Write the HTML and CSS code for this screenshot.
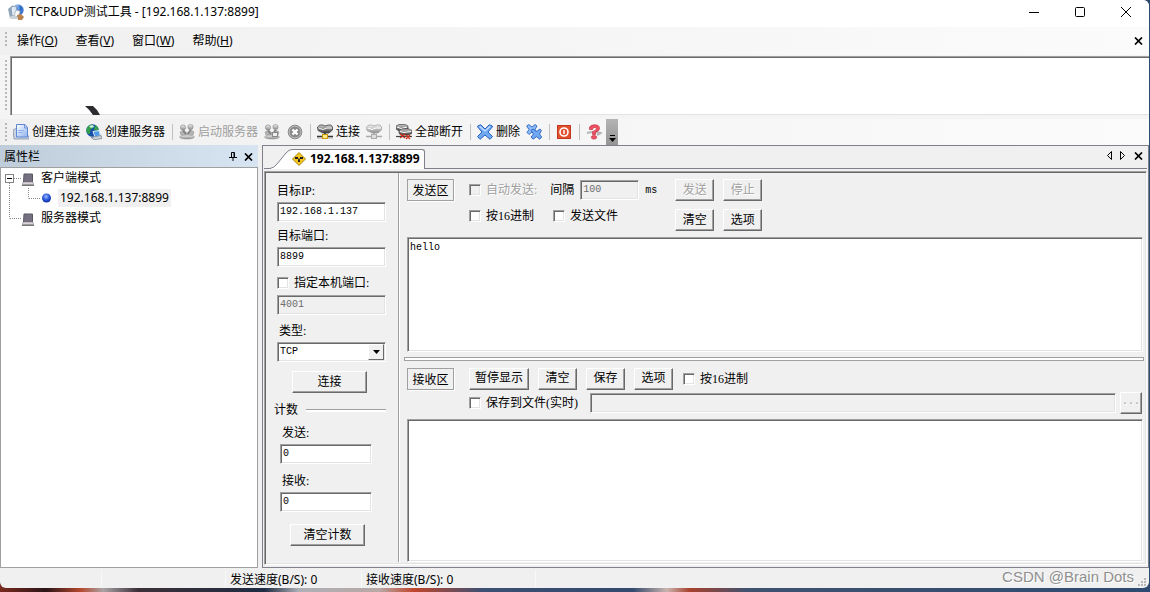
FILE: index.html
```html
<!DOCTYPE html>
<html lang="zh-CN">
<head>
<meta charset="utf-8">
<title>TCP&amp;UDP测试工具</title>
<link rel="stylesheet" href="styles.css">
</head>
<body>
<svg class="defs" width="0" height="0" aria-hidden="true">
  <defs>
    <linearGradient id="gBlue" x1="0" y1="0" x2="1" y2="1"><stop offset="0" stop-color="#a9cdf8"/><stop offset="1" stop-color="#1d58c0"/></linearGradient>
    <linearGradient id="gDoc" x1="0" y1="0" x2="1" y2="1"><stop offset="0" stop-color="#ffffff"/><stop offset="1" stop-color="#8fb2ee"/></linearGradient>
    <linearGradient id="gGray" x1="0" y1="0" x2="0" y2="1"><stop offset="0" stop-color="#f2f2f2"/><stop offset="1" stop-color="#8c8c8c"/></linearGradient>
    <linearGradient id="gDark" x1="0" y1="0" x2="0" y2="1"><stop offset="0" stop-color="#d0d0d0"/><stop offset="1" stop-color="#3a3a3a"/></linearGradient>
    <radialGradient id="gBall" cx=".45" cy=".35" r=".7"><stop offset="0" stop-color="#9fc0ff"/><stop offset=".5" stop-color="#2c58dc"/><stop offset="1" stop-color="#0a2a96"/></radialGradient>
    <symbol id="net" viewBox="0 0 16 16">
      <path d="M.5 3L3 1h3l2 1 3-1h3l1.500 2v3L12 9H6L1 6.500z" fill="url(#gDark)" stroke="#444" stroke-width=".8"/>
      <path d="M1.500 4l4.500 1.500L10 4l5 0" fill="none" stroke="#f4f4f4" stroke-width="1"/>
      <path d="M8 9v3" stroke="#444" stroke-width="2"/><path d="M0 12.500h16" stroke="#333" stroke-width="1.500"/><path d="M0 14h16" stroke="#aaa"/>
    </symbol>
    <symbol id="netoff" viewBox="0 0 16 16">
      <path d="M.5 3L3 1h3l2 1 3-1h3l1.500 2v3L12 9H6L1 6.500z" fill="url(#gGray)" stroke="#a4a4a4" stroke-width=".8"/>
      <path d="M1.500 4l4.500 1.500L10 4l5 0" fill="none" stroke="#fff" stroke-width="1"/>
      <path d="M8 9v3" stroke="#aaa" stroke-width="2"/><path d="M0 12.500h16" stroke="#aaa" stroke-width="1.500"/>
      <rect x="5.500" y="10.500" width="5" height="4" fill="#ddd" stroke="#aaa"/>
    </symbol>
    <symbol id="people" viewBox="0 0 16 16">
      <path d="M1 8l4-2 3 3 4-3 3 2-1 3-5 1-7-1z" fill="#b4b4b4" stroke="#969696" stroke-width=".6"/>
      <circle cx="4" cy="3.500" r="2.600" fill="url(#gGray)" stroke="#8f8f8f" stroke-width=".7"/>
      <circle cx="11.500" cy="3" r="2.600" fill="url(#gGray)" stroke="#8f8f8f" stroke-width=".7"/>
      <path d="M4 6.500l3 4M11.500 6L9 10" stroke="#808080" stroke-width="1.500"/>
      <ellipse cx="8" cy="13" rx="7.500" ry="2" fill="url(#gGray)" stroke="#999" stroke-width=".6"/>
    </symbol>
    <symbol id="host" viewBox="0 0 12 13">
      <path d="M2 1h8.500v8h-9z" fill="#757080" stroke="#5a5664"/>
      <path d="M1.300 9h9.500l1 2.500H.3z" fill="#ded6de" stroke="#8a858f" stroke-width=".6"/>
      <path d="M0 12.300h12" stroke="#555"/>
    </symbol>
    <symbol id="cross" viewBox="0 0 9 8"><path d="M1 .5l7 7M8 .5l-7 7" stroke="#000" stroke-width="1.700"/></symbol>
  </defs>
</svg>
<div class="window">
  <header class="titlebar">
    <svg class="app-icon" width="16" height="16" viewBox="0 0 16 16">
      <path d="M0 5l5-4 2 11-5 2z" fill="#8fa6ba"/><circle cx="10" cy="6" r="5.700" fill="url(#gBlue)"/>
      <path d="M11 1l3 2 1 3-3 1z" fill="#2f6fc4"/><path d="M3 3l5-1 1 9-5 1z" fill="#dfe9f3" stroke="#7e94a8" stroke-width=".7"/>
      <path d="M8 6l4 1-1 6-5-1z" fill="#f8f8f8" stroke="#8f98a2" stroke-width=".6"/><path d="M9 11l4-1 3 3-2 3h-4z" fill="#b98350"/><path d="M1 13l6-2 3 4H3z" fill="#c9d3dc"/>
    </svg>
    <h1 class="title">TCP&amp;UDP测试工具 - [192.168.1.137:8899]</h1>
    <div class="caption">
      <button class="bare" aria-label="最小化"><svg width="12" height="12" viewBox="0 0 12 12"><path d="M1 6.500h10" stroke="#000"/></svg></button>
      <button class="bare" aria-label="最大化"><svg width="12" height="12" viewBox="0 0 12 12"><rect x="1.500" y="1.500" width="9" height="9" rx="1" fill="none" stroke="#000"/></svg></button>
      <button class="bare" aria-label="关闭"><svg width="12" height="12" viewBox="0 0 12 12"><path d="M1 1l10 10M11 1L1 11" stroke="#000"/></svg></button>
    </div>
  </header>
  <nav class="menubar">
    <span class="grip"></span>
    <button class="bare">操作(<u>O</u>)</button>
    <button class="bare">查看(<u>V</u>)</button>
    <button class="bare">窗口(<u>W</u>)</button>
    <button class="bare">帮助(<u>H</u>)</button>
    <button class="bare doc-close" aria-label="关闭文档"><svg width="9" height="8"><use href="#cross"/></svg></button>
  </nav>
  <div class="banner">
    <span class="grip"></span>
    <div class="banner-view"><svg width="15" height="9" viewBox="0 0 15 9"><path d="M0 0h8q4 3 7 9H8Q5 4 0 0z" fill="#2b2b30"/></svg></div>
  </div>
  <div class="toolbar">
    <span class="grip"></span>
    <button class="tool"><svg width="16" height="16" viewBox="0 0 16 16"><path d="M0 6l4-2v8h12v3H1z" fill="#c9d2e0" stroke="#7887a2" stroke-width=".7"/><path d="M3.500 .5H12l2.500 3v9.500h-11z" fill="url(#gDoc)" stroke="#5e86d4"/><path d="M11.500 1v3h3" fill="none" stroke="#5e86d4" stroke-width=".8"/><path d="M5 6.500h6M5 8.500h5" stroke="#8fb2ee"/></svg>创建连接</button>
    <button class="tool"><svg width="16" height="16" viewBox="0 0 16 16"><circle cx="6.500" cy="6.500" r="6.300" fill="#164fa8"/><path d="M.5 5q2-5 6-4.500l1 3-3 2-1 5Q0 9 .5 5zM9 1q4 2 3.500 6L8 6z" fill="#35a04a"/><path d="M3 2l4-1 1 2-3 1z" fill="#c8f0e0"/><path d="M7 7.500l6-1 1.500 5L9 13z" fill="#4d9be8" stroke="#dfe9f2"/><path d="M5 13.500l10-2 1 3-8 1.200z" fill="#d0d6dd" stroke="#596370" stroke-width=".6"/></svg>创建服务器</button>
    <span class="sep"></span>
    <button class="tool" disabled><svg width="16" height="16"><use href="#people"/></svg>启动服务器</button>
    <button class="tool" aria-label="停止服务器" disabled><svg width="16" height="16" viewBox="0 0 16 16"><use href="#people"/><rect x="8.500" y="8.500" width="5" height="4" fill="#eee" stroke="#888"/></svg></button>
    <button class="tool wide-icon" aria-label="取消" disabled><svg width="16" height="16" viewBox="0 0 16 16"><circle cx="8" cy="8" r="6.800" fill="#8b8b8b" stroke="#7a7a7a"/><circle cx="8" cy="8" r="6" fill="none" stroke="#c4c4c4"/><path d="M5.500 5.500l5 5M10.500 5.500l-5 5" stroke="#fff" stroke-width="2.400"/></svg></button>
    <span class="sep"></span>
    <button class="tool"><svg width="16" height="16" viewBox="0 0 16 16"><use href="#net"/><rect x="5.500" y="10.500" width="5" height="4" fill="#ffe98a" stroke="#c79a00"/></svg>连接</button>
    <button class="tool" aria-label="断开" disabled><svg width="16" height="16"><use href="#netoff"/></svg></button>
    <span class="sep"></span>
    <button class="tool"><svg width="16" height="16" viewBox="0 0 16 16"><path d="M0 2l3-1.500h6L12 2v3L8 7H3L0 5z" fill="url(#gDark)" stroke="#444" stroke-width=".7"/><path d="M1 3l4 1.500L11 3" fill="none" stroke="#fff"/><path d="M3 6.500L6 5h7l3 1.500v3L12 11H7L3 9.500z" fill="url(#gDark)" stroke="#444" stroke-width=".7"/><path d="M4 7.500l4 1 7-1" fill="none" stroke="#fff"/><path d="M0 12.500h16" stroke="#444" stroke-width="1.200"/><path d="M4 10l5 4M9 10l-5 4M10 11l4 4M14 11l-4 4" stroke="#d42b14" stroke-width="1.400"/></svg>全部断开</button>
    <span class="sep"></span>
    <button class="tool"><svg width="16" height="16" viewBox="0 0 16 16"><path d="M.7 2l3-1.300L8 5l4.300-4.300 3 1.300v1L11 8l4.500 4.500-2.500 2.800L8 11l-5 4.300L.5 12.500 5 8 .7 3z" fill="#6fa9f2" stroke="#2a62c0"/><path d="M2.500 2.500L8 7l5-4.500" fill="none" stroke="#c9e0ff" stroke-width="1.200"/></svg>删除</button>
    <button class="tool" aria-label="全部删除"><svg width="16" height="16" viewBox="0 0 16 16"><path d="M.7 2l2-1.500L6 3l3-2.500 2 1.500-2 3.500 2.500 3-2 2L6 8l-3 2.500-2-2L3 5.500z" fill="#8ebcf6" stroke="#2a62c0" stroke-width=".9"/><path d="M5 6.500l2-1.500 3.500 2.500L14 5l1.500 1.500-2 3.500 2.200 3-2 2.200-3.200-2.500L7 15.200 5 13l2.500-3z" fill="#6fa9f2" stroke="#2a62c0" stroke-width=".9"/></svg></button>
    <span class="sep"></span>
    <button class="tool" aria-label="退出"><svg width="16" height="16" viewBox="0 0 16 16"><rect x="1.500" y="1.500" width="13" height="13" fill="#e2502f" stroke="#c43a1c"/><circle cx="8" cy="8" r="4" fill="none" stroke="#fff" stroke-width="1.600"/><path d="M8 6v4" stroke="#fff" stroke-width="1.500"/></svg></button>
    <span class="sep"></span>
    <button class="tool" aria-label="帮助"><svg width="16" height="16" viewBox="0 0 16 16"><path d="M1 9l5-1M10 8l5 1-4 2" fill="none" stroke="#b5b5b5" stroke-width="2"/><path d="M3.500 5.500V3Q5 .8 8.500 .8q5 0 5 3.700 0 2.500-4 3.700v2.300h-3V7.500q4-1 4-2.700 0-1.300-2-1.300-1.800 0-2 2z" fill="#ee5163" stroke="#c9303f" stroke-width=".7"/><ellipse cx="8" cy="13.300" rx="2.700" ry="1.800" fill="#ee5163" stroke="#c9303f" stroke-width=".7"/></svg></button>
    <button class="overflow" aria-label="更多"><svg width="7" height="7" viewBox="0 0 7 7"><path d="M1 .5h5" stroke="#000"/><path d="M0 3h7L3.500 7z" fill="#000"/></svg></button>
  </div>
  <main class="workspace">
    <aside class="side">
      <div class="side-head">
        <h2 class="side-title">属性栏</h2>
        <button class="bare" aria-label="固定"><svg width="8" height="9" viewBox="0 0 8 9"><path d="M2.500 5V.5h3V5M5 1v4M0 5.500h8M4 6v3" fill="none" stroke="#000"/></svg></button>
        <button class="bare" aria-label="关闭"><svg width="9" height="8"><use href="#cross"/></svg></button>
      </div>
      <ul class="tree">
        <li class="node"><svg width="35" height="20" viewBox="1 0 35 20"><path d="M14 10.500h8M9.500 15v5" stroke="#888" stroke-dasharray="1 1"/><rect x="5.500" y="6.500" width="8" height="8" fill="#fff" stroke="#848484"/><path d="M7 10.500h5" stroke="#000"/><use href="#host" x="22" y="5" width="12" height="13"/></svg><span class="node-text">客户端模式</span></li>
        <li class="node"><svg width="53" height="20" viewBox="1 0 53 20"><path d="M9.500 0v20M28.500 0v10.500M29 10.500h11" fill="none" stroke="#888" stroke-dasharray="1 1"/><circle cx="46.500" cy="10" r="4.500" fill="url(#gBall)"/></svg><span class="node-text selected">192.168.1.137:8899</span></li>
        <li class="node"><svg width="35" height="20" viewBox="1 0 35 20"><path d="M9.500 0v10.500M10 10.500h11" fill="none" stroke="#888" stroke-dasharray="1 1"/><use href="#host" x="22" y="5" width="12" height="13"/></svg><span class="node-text">服务器模式</span></li>
      </ul>
    </aside>
    <section class="docs">
      <div class="tabs">
        <span class="tab-lead"></span>
        <svg class="slope" width="22" height="20" viewBox="0 0 22 20"><path d="M0 20Q4 19 7 15L16 4Q19 .5 22 .5V20z" fill="#fff"/><path d="M0 19.500Q4 19 7 15L16 4Q19 .5 22 .5" fill="none" stroke="#80808a"/></svg>
        <button class="tab"><svg width="14" height="14" viewBox="0 0 14 14"><path d="M7 .5L13.500 7 7 13.500.5 7z" fill="#f6c61c" stroke="#a88718"/><path d="M5 6l2 1.500L9 6M7 7v3" stroke="#222" fill="none"/><path d="M3 5h3v2H3zM8 5h3v2H8zM6 8h2v2H6z" fill="#222"/></svg>192.168.1.137:8899</button>
        <div class="tab-tools">
          <button class="bare" aria-label="上一个"><svg width="6" height="9" viewBox="0 0 6 9"><path d="M5.500 .5v8l-4-4z" fill="none" stroke="#000"/></svg></button>
          <button class="bare" aria-label="下一个"><svg width="6" height="9" viewBox="0 0 6 9"><path d="M.5 .5v8l4-4z" fill="none" stroke="#000"/></svg></button>
          <button class="bare" aria-label="关闭标签"><svg width="9" height="8"><use href="#cross"/></svg></button>
        </div>
      </div>
      <div class="form">
        <div class="settings">
          <div class="field"><label for="ip">目标IP:</label><input id="ip" class="sunken" value="192.168.1.137"></div>
          <div class="field"><label for="port">目标端口:</label><input id="port" class="sunken" value="8899"></div>
          <div class="field local"><label class="check"><input type="checkbox">指定本机端口:</label><input class="sunken" aria-label="本机端口" value="4001" disabled></div>
          <div class="field kind"><label class="indent" for="kind">类型:</label>
            <div class="combo"><select id="kind" class="sunken"><option>TCP</option><option>UDP</option></select><span class="combo-arrow"><svg width="7" height="4" viewBox="0 0 7 4"><path d="M0 0h7L3.500 4z" fill="#000"/></svg></span></div></div>
          <button class="btn wide connect">连接</button>
          <h3 class="legend">计数</h3>
          <div class="field count"><label class="indent" for="sent">发送:</label><input id="sent" class="sunken" value="0"></div>
          <div class="field count"><label class="indent" for="got">接收:</label><input id="got" class="sunken" value="0"></div>
          <button class="btn wide reset">清空计数</button>
        </div>
        <div class="panes">
          <div class="pane-head">
            <span class="area">发送区</span>
            <div class="options">
              <div class="line">
                <label class="check off"><input type="checkbox" disabled>自动发送:</label>
                <label class="gap-label" for="gap">间隔</label>
                <input id="gap" class="sunken short" value="100" disabled>
                <span class="unit">ms</span>
              </div>
              <div class="line second">
                <label class="check"><input type="checkbox">按16进制</label>
                <label class="check"><input type="checkbox">发送文件</label>
              </div>
            </div>
            <div class="actions">
              <button class="btn" disabled>发送</button><button class="btn" disabled>停止</button>
              <button class="btn">清空</button><button class="btn">选项</button>
            </div>
          </div>
          <textarea class="sunken text send" aria-label="发送内容">hello</textarea>
          <div class="splitter"></div>
          <div class="pane-head">
            <span class="area">接收区</span>
            <div class="recv-options">
              <div class="line buttons">
                <button class="btn pause">暂停显示</button><button class="btn">清空</button><button class="btn">保存</button><button class="btn">选项</button>
                <label class="check"><input type="checkbox">按16进制</label>
              </div>
              <div class="line save">
                <label class="check"><input type="checkbox">保存到文件(实时)</label>
                <input class="sunken path" aria-label="文件路径" disabled>
                <button class="btn browse" disabled>...</button>
              </div>
            </div>
          </div>
          <textarea class="sunken text recv" aria-label="接收内容"></textarea>
        </div>
      </div>
    </section>
  </main>
  <footer class="status">
    <span class="cell first"></span><span class="cell second-cell"></span>
    <span class="cell rate">发送速度(B/S): 0</span>
    <span class="cell rate last">接收速度(B/S): 0</span>
    <span class="credit">CSDN @Brain Dots</span>
    <svg width="9" height="9" viewBox="0 0 9 9"><path d="M6 0h2v2H6zM3 3h2v2H3zM6 3h2v2H6zM0 6h2v2H0zM3 6h2v2H3zM6 6h2v2H6z" fill="#b8b8b8"/></svg>
  </footer>
</div>
</body>
</html>
```
FILE: styles.css
```css
* { box-sizing: border-box; }
body {
  margin: 0;
  height: 100vh;
  padding: 0 1px 4px 0;
  background: linear-gradient(90deg, #7a2a1e 0, #2b1518 4%, #b5482f 7%, #a9a3a5 9%, #3c3038 12%, #1f2c42 23%, #aeb0b6 26%, #b9a8a6 33%, #c0452c 36%, #3c5074 42%, #33496d 55%, #c9b4ae 58%, #a8402c 60%, #3f5270 65%, #2f4a70 100%);
  font: 12px/16px "Noto Sans", "Noto Sans CJK SC", sans-serif;
  color: #000;
}
button, input, select, textarea { font: inherit; color: inherit; margin: 0; border-radius: 0; }
h1, h2, h3, ul { margin: 0; padding: 0; font-size: 12px; font-weight: normal; list-style: none; }
svg { display: block; flex: none; }
.defs { position: absolute; }
.bare { border: 0; background: none; padding: 0; white-space: nowrap; }
.window { height: 100%; display: flex; flex-direction: column; background: #f0f0f0; border-radius: 0 6px 6px 6px; overflow: hidden; }

.titlebar { display: flex; align-items: center; height: 27px; padding: 0 17px 4px 8px; background: #fff; }
.title { margin-left: 5px; }
.caption { margin-left: auto; display: flex; gap: 34px; }

.grip { width: 3px; align-self: stretch; margin: 4px 0; background: repeating-linear-gradient(#b8b8b8 0 2px, transparent 2px 4px); background-size: 2px 100%; background-repeat: no-repeat; }
.menubar { display: flex; align-items: center; gap: 18px; height: 28px; padding: 0 6px 0 5px; background: linear-gradient(90deg, #f0f0f0, #fbfbfb); }
.menubar .grip { margin: 5px -9px 7px 0; }
.doc-close { margin-left: auto; }

.banner { display: flex; gap: 2px; padding: 1px 0 4px 5px; background: #f4f4f4; }
.banner-view { flex: 1; height: 59px; display: flex; align-items: flex-end; padding-left: 74px; background: #fff; border: 0 solid #a0a0a0; border-width: 1px 0 0 1px; box-shadow: inset 1px 1px #696969, inset 0 -1px #e3e3e3; }

.toolbar { display: flex; align-items: center; gap: 6px; height: 26px; padding-left: 5px; background: linear-gradient(90deg, #f0f0f0, #fbfbfb); }
.toolbar .grip { margin-right: -1px; }
.tool { display: flex; align-items: center; gap: 3px; border: 0; padding: 0; background: none; white-space: nowrap; }
.tool:disabled { color: #a0a0a0; }
.wide-icon { padding-left: 1px; }
.sep { width: 1px; height: 16px; margin-left: 1px; background: #c0c0c0; }
.overflow { align-self: stretch; width: 12px; border: 0; padding: 0 0 3px; margin-left: -2px; display: flex; align-items: flex-end; justify-content: center; background: linear-gradient(#b4b4b4, #949494); }

.workspace { flex: 1; min-height: 0; display: flex; gap: 4px; }
.side { width: 258px; display: flex; flex-direction: column; }
.side-head { display: flex; align-items: center; gap: 7px; height: 22px; padding: 1px 5px 0 4px; background: linear-gradient(90deg, #bfcddb, #d7e4f2); }
.side-title { margin-right: auto; }
.tree { flex: 1; background: #fff; border: 1px solid #a0a0a0; }
.node { display: flex; align-items: center; height: 20px; }
.node-text { margin-left: 5px; line-height: 18px; }
.selected { margin-left: 4px; padding: 0 2px; background: #f0f0f0; }

.docs { flex: 1; min-width: 0; display: flex; flex-direction: column; border: 1px solid #80808a; padding: 0 1px 2px 1px; }
.tabs { display: flex; align-items: flex-end; height: 23px; margin-bottom: 2px; }
.tab-lead { width: 6px; border-bottom: 1px solid #80808a; }
.tab { display: flex; align-items: center; gap: 4px; height: 20px; padding: 0 4px 2px 0; border: solid #80808a; border-width: 1px 1px 0 0; border-radius: 0 3px 0 0; background: #fff; font-weight: bold; white-space: nowrap; }
.tab-tools { flex: 1; align-self: stretch; display: flex; align-items: center; justify-content: flex-end; gap: 8px; padding: 0 4px 3px; border-bottom: 1px solid #80808a; }

.form { flex: 1; min-height: 0; display: flex; border: 1px solid; border-color: #a0a0a0 #fff #fff #a0a0a0; box-shadow: inset 1px 1px #696969, inset -1px -1px #e3e3e3; padding: 1px; font-family: "Liberation Serif", "Noto Sans CJK SC", serif; }
.settings { width: 133px; margin-bottom: 1px; padding: 10px 12px 0 11px; display: flex; flex-direction: column; border-right: 1px solid #a0a0a0; box-shadow: 1px 0 #fff; }
.field { display: flex; flex-direction: column; gap: 3px; margin-bottom: 6px; }
.field .indent { padding-left: 2px; }
.local { gap: 4px; margin-top: 2px; margin-bottom: 8px; }
.kind { margin-bottom: 9px; }
.sunken { display: block; min-width: 0; height: 20px; padding: 0 1px 1px 2px; border: 1px solid; border-color: #a0a0a0 #fff #fff #a0a0a0; box-shadow: inset 1px 1px #696969, inset -1px -1px #e3e3e3; background: #fff; font: 10px/14px "Liberation Mono", "Noto Sans CJK SC", monospace; outline: 0; }
.sunken:disabled { background: #f0f0f0; color: #6d6d6d; }
.combo { position: relative; }
.combo .sunken { width: 100%; appearance: none; }
.combo-arrow { position: absolute; right: 2px; top: 2px; bottom: 2px; width: 16px; display: flex; align-items: center; justify-content: center; background: #f0f0f0; border: 1px solid; border-color: #fff #696969 #696969 #fff; pointer-events: none; }
.btn { height: 22px; width: 39px; padding: 0 0 1px; background: #f0f0f0; border: 1px solid; border-color: #fff #696969 #696969 #fff; box-shadow: inset -1px -1px #a0a0a0; white-space: nowrap; line-height: 16px; }
.btn:disabled, .off { color: #a0a0a0; text-shadow: 1px 1px #fff; }
.wide { width: 75px; }
.connect { margin-left: 15px; margin-bottom: 9px; }
.legend { display: flex; align-items: center; gap: 8px; margin: 0 0 7px -3px; }
.legend::after { content: ""; flex: 1; height: 2px; border-top: 1px solid #a0a0a0; background: #fff; }
.count { width: 92px; margin-left: 3px; margin-bottom: 9px; }
.reset { margin: 3px 0 0 13px; }

.check { display: flex; align-items: center; gap: 5px; white-space: nowrap; }
.check input { appearance: none; flex: none; width: 12px; height: 12px; border: 1px solid; border-color: #a0a0a0 #fff #fff #a0a0a0; box-shadow: inset 1px 1px #696969, inset -1px -1px #e3e3e3; background: #fff; }
.check input:disabled { background: #f0f0f0; }
.check input:checked { background: #444; }

.panes { flex: 1; min-width: 0; display: flex; flex-direction: column; padding: 6px 1px 0 8px; }
.pane-head { display: flex; align-items: flex-start; gap: 15px; }
.area { flex: none; width: 47px; padding: 3px 0 1px; text-align: center; border: 1px solid #a0a0a0; box-shadow: 1px 1px #fff; }
.options { display: flex; flex-direction: column; gap: 4px; }
.line { display: flex; align-items: center; }
.options .line { height: 22px; }
.options .second { gap: 19px; }
.gap-label { margin-left: 13px; }
.short { width: 59px; margin-left: 6px; }
.unit { margin: 2px 0 0 6px; font: 10px/14px "Liberation Mono", monospace; }
.actions { display: grid; grid-template-columns: 39px 39px; gap: 8px 9px; margin-left: 3px; }
.text { width: auto; margin-right: 1px; resize: none; padding: 3px 2px; }
.send { flex: 114 1 0; margin-top: 6px; }
.splitter { height: 4px; margin: 5px 0 7px -3px; border: 1px solid #a0a0a0; background: #fff; }
.recv-options { flex: 1; min-width: 0; }
.buttons { gap: 9px; }
.buttons .pause { width: 60px; }
.buttons .check { margin-left: 1px; }
.save { margin: 2px 2px 0 0; }
.path { flex: 1; margin: 0 4px 0 12px; }
.browse { width: 22px; font: 10px/14px "Liberation Mono", monospace; }
.recv { flex: 144 1 0; margin-top: 5px; margin-bottom: 1px; }

.status { display: flex; align-items: center; gap: 2px; height: 20px; padding: 1px 2px 0 0; }
.cell { height: 18px; line-height: 20px; border-right: 1px solid #f8f8f8; white-space: nowrap; padding-left: 2px; }
.first { width: 102px; }
.second-cell { width: 122px; }
.rate { width: 134px; }
.last { width: 172px; }
.credit { margin: 0 2px 4px auto; font: 15px/18px "Liberation Sans", sans-serif; color: #8f8f8f; text-shadow: 1px 1px #fff; white-space: nowrap; }
.status svg { align-self: flex-end; margin-bottom: 1px; }
```
